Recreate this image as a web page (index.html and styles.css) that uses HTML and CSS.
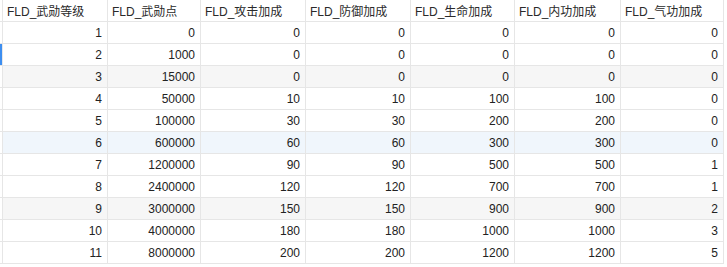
FILE: index.html
```html
<!DOCTYPE html>
<html>
<head>
<meta charset="utf-8">
<link rel="stylesheet" href="styles.css">
</head>
<body>
<div class="grid">
  <div class="row head">
    <div class="mark"></div>
    <div class="cell">FLD_武勋等级</div>
    <div class="cell">FLD_武勋点</div>
    <div class="cell">FLD_攻击加成</div>
    <div class="cell">FLD_防御加成</div>
    <div class="cell">FLD_生命加成</div>
    <div class="cell">FLD_内功加成</div>
    <div class="cell">FLD_气功加成</div>
  </div>
  <div class="row"><div class="mark"></div><div class="cell">1</div><div class="cell">0</div><div class="cell">0</div><div class="cell">0</div><div class="cell">0</div><div class="cell">0</div><div class="cell">0</div></div>
  <div class="row"><div class="mark sel"></div><div class="cell">2</div><div class="cell">1000</div><div class="cell">0</div><div class="cell">0</div><div class="cell">0</div><div class="cell">0</div><div class="cell">0</div></div>
  <div class="row gray"><div class="mark"></div><div class="cell">3</div><div class="cell">15000</div><div class="cell">0</div><div class="cell">0</div><div class="cell">0</div><div class="cell">0</div><div class="cell">0</div></div>
  <div class="row"><div class="mark"></div><div class="cell">4</div><div class="cell">50000</div><div class="cell">10</div><div class="cell">10</div><div class="cell">100</div><div class="cell">100</div><div class="cell">0</div></div>
  <div class="row"><div class="mark"></div><div class="cell">5</div><div class="cell">100000</div><div class="cell">30</div><div class="cell">30</div><div class="cell">200</div><div class="cell">200</div><div class="cell">0</div></div>
  <div class="row blue"><div class="mark"></div><div class="cell">6</div><div class="cell">600000</div><div class="cell">60</div><div class="cell">60</div><div class="cell">300</div><div class="cell">300</div><div class="cell">0</div></div>
  <div class="row"><div class="mark"></div><div class="cell">7</div><div class="cell">1200000</div><div class="cell">90</div><div class="cell">90</div><div class="cell">500</div><div class="cell">500</div><div class="cell">1</div></div>
  <div class="row"><div class="mark"></div><div class="cell">8</div><div class="cell">2400000</div><div class="cell">120</div><div class="cell">120</div><div class="cell">700</div><div class="cell">700</div><div class="cell">1</div></div>
  <div class="row gray"><div class="mark"></div><div class="cell">9</div><div class="cell">3000000</div><div class="cell">150</div><div class="cell">150</div><div class="cell">900</div><div class="cell">900</div><div class="cell">2</div></div>
  <div class="row"><div class="mark"></div><div class="cell">10</div><div class="cell">4000000</div><div class="cell">180</div><div class="cell">180</div><div class="cell">1000</div><div class="cell">1000</div><div class="cell">3</div></div>
  <div class="row"><div class="mark"></div><div class="cell">11</div><div class="cell">8000000</div><div class="cell">200</div><div class="cell">200</div><div class="cell">1200</div><div class="cell">1200</div><div class="cell">5</div></div>
</div>
</body>
</html>
```
FILE: styles.css
```css
html, body {
  margin: 0;
  padding: 0;
  background: #ffffff;
}
body {
  font-family: "Liberation Sans", "Noto Sans CJK SC", sans-serif;
  font-size: 12px;
  color: #222222;
}
.grid {
  display: flex;
  flex-direction: column;
  width: 724px;
}
.row {
  display: grid;
  grid-template-columns: 2px 105px 93px 105px 105px 104px 106px 104px;
  height: 22px;
  box-sizing: border-box;
  border-bottom: 1px solid #e6e6e6;
}
.row.gray {
  background: #f6f6f6;
}
.row.blue {
  background: #f0f6fc;
}
.mark {
  background: #ffffff;
}
.mark.sel {
  background: #3d8ef0;
}
.cell {
  border-left: 1px solid #e6e6e6;
  display: flex;
  align-items: center;
  justify-content: flex-end;
  padding: 0 5px 0 4px;
  white-space: nowrap;
  overflow: hidden;
}
.cell:last-child {
  border-right: 1px solid #e6e6e6;
}
.head .cell {
  justify-content: flex-start;
  padding-left: 4px;
  color: #2a2a2a;
}
```
